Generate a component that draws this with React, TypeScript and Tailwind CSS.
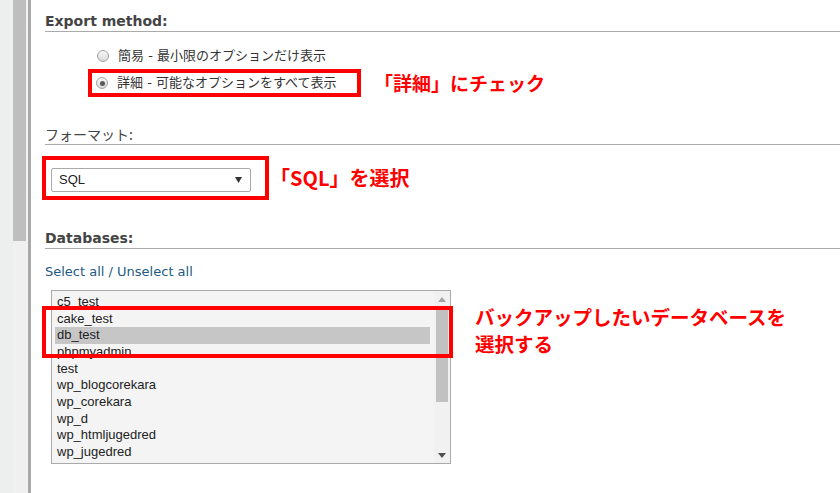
import React from "react";

const items = [
  "c5_test",
  "cake_test",
  "db_test",
  "phpmyadmin",
  "test",
  "wp_blogcorekara",
  "wp_corekara",
  "wp_d",
  "wp_htmljugedred",
  "wp_jugedred",
  "wp_test",
];

function Radio({ checked }: { checked?: boolean }) {
  return (
    <span className="w-[12px] h-[12px] shrink-0 rounded-full border border-[#a3a3a3] bg-linear-to-b from-[#f7f7f7] to-[#d9d9d9] flex items-center justify-center">
      {checked && <span className="w-[5px] h-[5px] rounded-full bg-[#5a5a5a]" />}
    </span>
  );
}

function Heading({ children, jp }: { children: React.ReactNode; jp?: boolean }) {
  return (
    <div
      className={`text-[14px] leading-[18px] pb-[1px] border-b border-[#aaaaaa] text-[#444] ${
        jp ? "font-['Noto_Sans_CJK_JP',sans-serif]" : "font-bold font-['DejaVu_Sans','Noto_Sans_CJK_JP',sans-serif]"
      }`}
    >
      {children}
    </div>
  );
}

const red = "font-bold text-[#ff0000] font-['Noto_Sans_CJK_JP',sans-serif]";
const label = "text-[13px] text-[#333] font-['DejaVu_Sans','Noto_Sans_CJK_JP',sans-serif]";

export default function App() {
  return (
    <div className="w-[840px] h-[493px] overflow-hidden bg-white flex">
      {/* left strip */}
      <div className="flex h-full shrink-0">
        <div className="w-[13px] bg-[#edefee]" />
        <div className="w-[13px] flex flex-col bg-[#f0f0f0]">
          <div className="h-[241px] bg-[#bebebe]" />
        </div>
        <div className="w-[2px] bg-[#f2f2f2]" />
        <div className="w-[3px] bg-[#a9a9a9]" />
      </div>

      {/* content */}
      <div className="flex-1 pl-[14px] pt-[12px] flex flex-col">
        <Heading>Export method:</Heading>

        <div className={`mt-[14px] ml-[52px] h-[19px] flex items-center gap-[9px] ${label}`}>
          <Radio />
          <span>簡易 - 最小限のオプションだけ表示</span>
        </div>

        <div className="mt-[4px] ml-[43px] flex items-center">
          <div className={`h-[28px] w-[273px] border-[4px] border-[#ff0000] pl-[4px] flex items-center gap-[9px] ${label}`}>
            <Radio checked />
            <span>詳細 - 可能なオプションをすべて表示</span>
          </div>
          <span className={`ml-[13px] text-[19px] leading-[24px] ${red}`}>「詳細」にチェック</span>
        </div>

        <div className="mt-[28px]">
          <Heading jp>フォーマット:</Heading>
        </div>

        <div className="mt-[11px] -ml-[3px] flex items-center">
          <div className="w-[227px] h-[44px] border-[4px] border-[#ff0000] pl-[5px] pt-[3px] flex items-center">
            <div className="w-[200px] h-[24px] border border-[#aaaaaa] rounded-[2px] bg-white flex items-center justify-between pl-[7px] pr-[8px]">
              <span className="text-[13px] text-[#222] font-['Liberation_Sans',sans-serif]">SQL</span>
              <svg width="7" height="6" viewBox="0 0 7 6">
                <path d="M0 0 L7 0 L3.5 6 Z" fill="#333" />
              </svg>
            </div>
          </div>
          <span className={`ml-[1px] text-[20px] leading-[26px] ${red}`}>「SQL」を選択</span>
        </div>

        <div className="mt-[29px]">
          <Heading>Databases:</Heading>
        </div>

        <div className="mt-[15px] text-[13px] leading-[16px] text-[#235a81] font-['DejaVu_Sans',sans-serif]">
          <span>Select all</span> / <span>Unselect all</span>
        </div>

        <div className="mt-[10px] flex items-start">
          <div className="relative ml-[6px] w-[400px] h-[174px] border border-[#aaaaaa] bg-[#f4f4f4] flex">
            <div className="w-[382px] pt-[3px] pl-[3px] pr-[4px] overflow-hidden">
              {items.map((it) => (
                <div
                  key={it}
                  className={`h-[16.67px] leading-[16.67px] pl-[2px] text-[13px] text-[#222] font-['Liberation_Sans',sans-serif] whitespace-nowrap ${
                    it === "db_test" ? "bg-[#c6c6c6]" : ""
                  }`}
                >
                  {it}
                </div>
              ))}
            </div>
            <div className="w-[16px] flex flex-col bg-[#f1f1f1]">
              <div className="h-[16px] flex items-center justify-center">
                <svg width="8" height="5" viewBox="0 0 8 5">
                  <path d="M0 5 L8 5 L4 0 Z" fill="#a3a3a3" />
                </svg>
              </div>
              <div className="mx-[2px] h-[95px] bg-[#c1c1c1]" />
              <div className="flex-1" />
              <div className="h-[16px] flex items-center justify-center">
                <svg width="8" height="5" viewBox="0 0 8 5">
                  <path d="M0 0 L8 0 L4 5 Z" fill="#505050" />
                </svg>
              </div>
            </div>
            <div className="absolute left-[-10px] top-[15px] w-[411px] h-[52px] border-[4px] border-[#ff0000]" />
          </div>
          <div className={`ml-[24px] mt-[13px] text-[19.5px] leading-[27px] ${red}`}>
            バックアップしたいデータベースを
            <br />
            選択する
          </div>
        </div>
      </div>
    </div>
  );
}
